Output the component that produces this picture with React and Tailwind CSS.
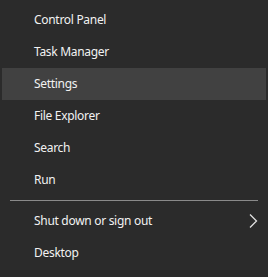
import React from "react";

const top = ["Control Panel", "Task Manager", "Settings", "File Explorer", "Search", "Run"];

const Item = ({ label, active, children }) => (
  <div
    className={`h-8 flex items-center justify-between pl-[32px] pr-[10px] mx-[2px] ${
      active ? "bg-[#414141]" : ""
    }`}
  >
    <span>{label}</span>
    {children}
  </div>
);

export default function App() {
  return (
    <div
      className="w-[268px] h-[277px] bg-[#2b2b2b] text-[#f2f2f2] text-[12px] tracking-[-0.3px] pt-1"
      style={{ fontFamily: '"Noto Sans", "Open Sans", sans-serif' }}
    >
      {top.map((t) => (
        <Item key={t} label={t} active={t === "Settings"} />
      ))}
      <div className="my-1 mx-[10px] h-px bg-[#8a8a8a]" />
      <Item label="Shut down or sign out">
        <svg width="9" height="14" viewBox="0 0 9 14" className="mr-[-2px]">
          <polyline points="1,0.5 7.5,7 1,13.5" fill="none" stroke="#e0e0e0" strokeWidth="1.3" />
        </svg>
      </Item>
      <Item label="Desktop" />
    </div>
  );
}
